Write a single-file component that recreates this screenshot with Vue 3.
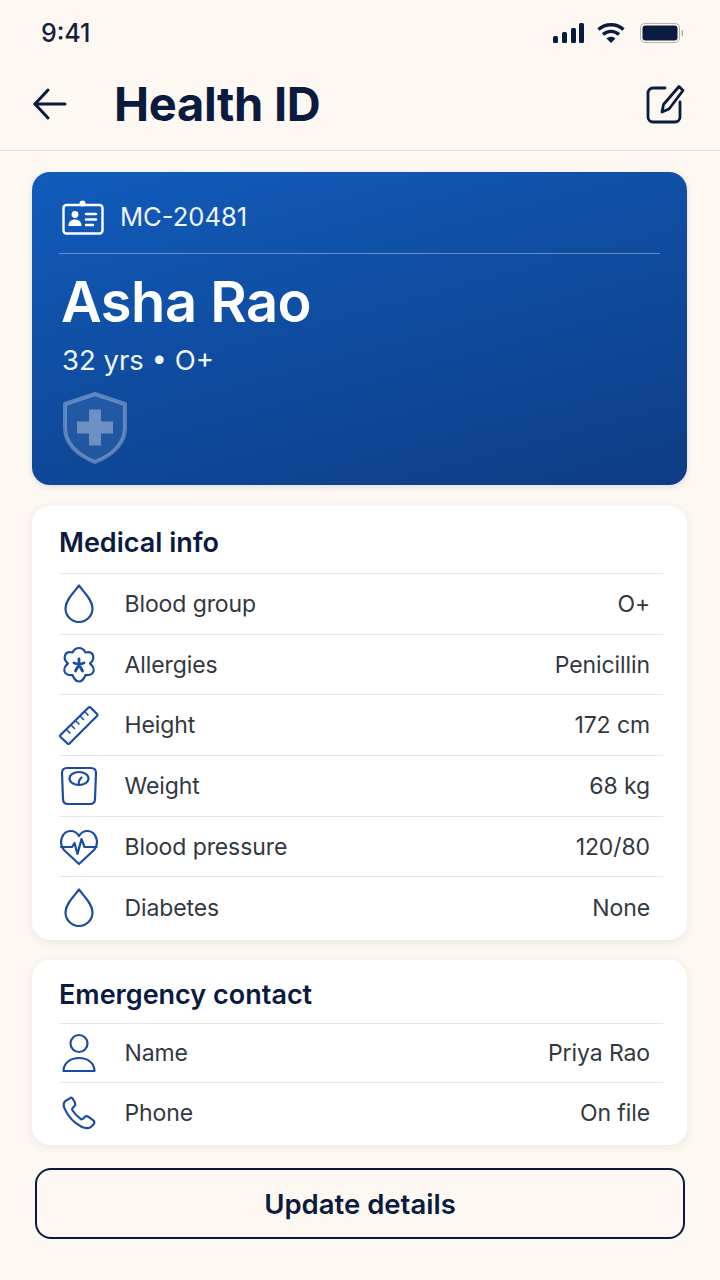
<template>
  <div class="screen">
    <!-- status bar -->
    <div class="status-bar">
      <span class="time">9:41</span>
      <div class="status-icons">
        <svg width="32" height="20" viewBox="0 0 32 20" fill="#0b1b3f">
          <rect x="0" y="13" width="5" height="7" rx="1.5" />
          <rect x="9" y="9" width="5" height="11" rx="1.5" />
          <rect x="18" y="5" width="5" height="15" rx="1.5" />
          <rect x="26" y="0" width="5" height="20" rx="1.5" />
        </svg>
        <svg class="wifi" width="28" height="22" viewBox="0 0 28 22" fill="none" stroke="#0b1b3f" stroke-width="3.4">
          <path d="M1.500 7.500c7-6.400 18-6.400 25 0" />
          <path d="M6 12.400c4.500-4.100 11.500-4.100 16 0" />
          <path d="M14 21l-4.500-4.600c2.500-2.200 6.500-2.200 9 0z" fill="#0b1b3f" stroke="none" />
        </svg>
        <svg width="44" height="20" viewBox="0 0 44 20">
          <rect x="0.500" y="0.500" width="39" height="19" rx="4.500" fill="#fdf8f2" stroke="#b5b4b0" />
          <rect x="2.500" y="2.500" width="35" height="15" rx="3" fill="#0b1b3f" />
          <rect x="41.500" y="7" width="1.500" height="6" rx="0.700" fill="#a9a9a7" />
        </svg>
      </div>
    </div>

    <!-- header -->
    <header class="app-header">
      <svg class="back" width="36" height="36" viewBox="0 0 36 36" fill="none" stroke="#0b1b3f" stroke-width="3" stroke-linecap="round" stroke-linejoin="round">
        <path d="M33 18H3" />
        <path d="M16 4 3 18l13 14" />
      </svg>
      <h1 class="title">Health ID</h1>
      <svg class="edit" width="40" height="40" viewBox="0 0 40 40" fill="none" stroke="#0b1b3f" stroke-width="2.800" stroke-linecap="round" stroke-linejoin="round">
        <path d="M20 4H8a5 5 0 0 0-5 5v24a5 5 0 0 0 5 5h22a5 5 0 0 0 5-5V18" />
        <path d="M34 2.500 38 6.500 24 25l-7 3 1.500-7.500z" />
      </svg>
    </header>

    <main class="content">
      <!-- id card -->
      <section class="hero">
        <div class="hero-id">
          <svg width="42" height="36" viewBox="0 0 42 36" fill="none" stroke="#fff" stroke-width="2.400" stroke-linecap="round" stroke-linejoin="round">
            <rect x="1.500" y="6" width="39" height="28.500" rx="3" />
            <circle cx="20.500" cy="4.500" r="3" fill="#fff" stroke="none" />
            <circle cx="13" cy="15.500" r="3.400" fill="#fff" stroke="none" />
            <path d="M6.500 27c0-4.500 3-6.500 6.500-6.500s6.500 2 6.500 6.500z" fill="#fff" stroke="none" />
            <path d="M24 15h10M24 20.500h10M24 26h7" />
          </svg>
          <span>MC-20481</span>
        </div>
        <div class="hero-text">
          <div class="hero-name">Asha Rao</div>
          <div class="hero-meta">32 yrs • O+</div>
          <svg class="shield" width="66" height="74" viewBox="0 0 66 74">
            <path d="M33 3 63 13v24c0 15-12 27-30 34C15 64 3 52 3 37V13z" fill="rgba(255,255,255,0.08)" stroke="rgba(255,255,255,0.3)" stroke-width="4" stroke-linejoin="round" />
            <path d="M27 19h12v12h12v12H39v12H27V43H15V31h12z" transform="translate(0 -0.500)" fill="rgba(255,255,255,0.34)" />
          </svg>
        </div>
      </section>

      <!-- medical info -->
      <section class="card medical">
        <h2 class="card-title">Medical info</h2>
        <div v-for="row in medicalRows" :key="row.label" class="row">
          <svg class="row-icon" width="40" height="40" viewBox="0 0 40 40" fill="none" stroke="#1b4ca3" stroke-width="2.200" stroke-linecap="round" stroke-linejoin="round">
            <template v-if="row.icon === 'drop'">
              <path d="M20 1.500c4.500 6.500 13.500 14 13.500 23a13.500 13.500 0 0 1-27 0C6.500 15.500 15.500 8 20 1.500z" />
            </template>
            <template v-else-if="row.icon === 'allergy'">
              <path d="M20 3c3.500 0 5.500 2.500 6.500 4.500 2.500-.5 6.500-.5 7.500 3 1 3.500-1 6.500-3 8 2 1.500 4.500 5 3.500 8-1 3.500-5.500 4-8 3.500-1 2.500-3 6.500-6.500 6.500s-5.500-4-6.500-6.500c-2.500.5-7 0-8-3.500-1-3 1.500-6.500 3.500-8-2-1.500-4-4.500-3-8 1-3.500 5-3.500 7.500-3C14.500 5.500 16.500 3 20 3z" />
              <path d="M20 14v6M15 18l5 1.500 5-1.500M20 19.500 16.500 26M20 19.500 23.500 26" stroke-width="2.800" />
            </template>
            <template v-else-if="row.icon === 'ruler'">
              <path d="M1.500 30 29.500 2.500a1.500 1.500 0 0 1 2 0L38 9a1.500 1.500 0 0 1 0 2L10.500 38.500a1.500 1.500 0 0 1-2 0L1.500 32a1.500 1.500 0 0 1 0-2z" />
              <path d="M8 25l3 3M12.500 20.500l3 3M17 16l3 3M21.500 11.500l3 3M26 7l3 3" stroke-width="1.600" />
            </template>
            <template v-else-if="row.icon === 'scale'">
              <path d="M8 2h24c3 0 5 2 5 5l-1 26c0 3-2 5-5 5H9c-3 0-5-2-5-5L3 7c0-3 2-5 5-5z" />
              <ellipse cx="20" cy="12.500" rx="9.500" ry="6.500" />
              <path d="M20 19c-1-3 0-5 2.500-7.500" />
            </template>
            <template v-else-if="row.icon === 'heart'">
              <path d="M20 37 5 23C-1 16 3 4.500 11 4c4-.2 7 1.500 9 5 2-3.500 5-5.200 9-5 8 .5 12 12 6 19z" />
              <path d="M2 20h11l2.500-4 3 11 4-15 3 8h12" />
            </template>
          </svg>
          <span class="row-label">{{ row.label }}</span>
          <span class="row-value">{{ row.value }}</span>
        </div>
      </section>

      <!-- emergency contact -->
      <section class="card contact">
        <h2 class="card-title">Emergency contact</h2>
        <div class="row">
          <svg class="row-icon" width="40" height="40" viewBox="0 0 40 40" fill="none" stroke="#1b4ca3" stroke-width="2.200" stroke-linecap="round" stroke-linejoin="round">
            <circle cx="20" cy="10.500" r="8.500" />
            <path d="M4.500 38c0-8 7-13 15.500-13s15.500 5 15.500 13z" />
          </svg>
          <span class="row-label">Name</span>
          <span class="row-value">Priya Rao</span>
        </div>
        <div class="row">
          <svg class="row-icon" width="40" height="40" viewBox="0 0 40 40" fill="none" stroke="#1b4ca3" stroke-width="2.500" stroke-linecap="round" stroke-linejoin="round">
            <path transform="translate(2.500 2.500) scale(.87)" d="M10 3 5 6C2 8 2 12 4 16c4 9 10 15 19 20 4 2 8 2 11 0l3-3c1-1.500 1-3 0-4l-6-4.500c-1.500-1-3-1-4 0l-2 2c-1 1-2 1-3 .5-4-3-7-6-9.500-10-.5-1-.5-2 .5-3l2-2c1-1 1-2.500 .5-4L13 4c-.5-1.500-2-2-3-1z" />
          </svg>
          <span class="row-label">Phone</span>
          <span class="row-value">On file</span>
        </div>
      </section>

      <button class="update-btn">Update details</button>
    </main>
  </div>
</template>

<script setup>
const medicalRows = [
  { icon: "drop", label: "Blood group", value: "O+" },
  { icon: "allergy", label: "Allergies", value: "Penicillin" },
  { icon: "ruler", label: "Height", value: "172 cm" },
  { icon: "scale", label: "Weight", value: "68 kg" },
  { icon: "heart", label: "Blood pressure", value: "120/80" },
  { icon: "drop", label: "Diabetes", value: "None" },
];
</script>

<style>
html,
body {
  margin: 0;
  background: #fdf8f2;
}
</style>

<style scoped>
.screen {
  width: 720px;
  height: 1280px;
  overflow: hidden;
  background: #fdf8f2;
  font-family: Inter, "Liberation Sans", sans-serif;
  color: #0b1b3f;
}

.status-bar {
  height: 68px;
  box-sizing: border-box;
  padding: 0 36px 2px 41px;
  display: flex;
  align-items: center;
  justify-content: space-between;
}

.time {
  font-size: 25px;
  font-weight: 500;
  color: #14213d;
}

.status-icons {
  display: flex;
  align-items: center;
  gap: 12px;
}

.wifi {
  margin-right: 3px;
}

.app-header {
  height: 83px;
  box-sizing: border-box;
  padding: 0 35px 10px 32px;
  display: flex;
  align-items: center;
  border-bottom: 1px solid #e4e1dd;
}

.title {
  margin: 0 0 2px 46px;
  flex: 1;
  font-size: 47px;
  font-weight: 700;
  letter-spacing: -0.3px;
  color: #0b1b3f;
}

.content {
  padding: 21px 33px 0 32px;
}

.hero {
  height: 313px;
  box-sizing: border-box;
  padding: 24px 27px 0 27px;
  border-radius: 18px;
  background: linear-gradient(165deg, #115cbc 0%, #0f4a9c 55%, #0e3d85 100%);
  box-shadow: 0 2px 6px rgba(20, 40, 80, 0.12);
  color: #fff;
}

.hero-id {
  height: 58px;
  padding: 0 3px 16px;
  box-sizing: border-box;
  display: flex;
  align-items: center;
  gap: 16px;
  font-size: 25.6px;
  color: #eef4fc;
  border-bottom: 1px solid rgba(255, 255, 255, 0.35);
}

.hero-text {
  padding-left: 2px;
}

.hero-name {
  margin-top: 14px;
  font-size: 56px;
  line-height: 68px;
  font-weight: 600;
  letter-spacing: -0.5px;
}

.hero-meta {
  margin-top: 7px;
  padding-left: 1px;
  font-size: 27.5px;
  line-height: 34px;
  color: #eef4fc;
}

.shield {
  display: block;
  margin: 14px 0 0 1px;
}

.card {
  margin-top: 21px;
  box-sizing: border-box;
  padding: 0 24px 0 27px;
  background: #fff;
  border-radius: 18px;
  box-shadow: 0 2px 10px rgba(60, 50, 40, 0.09);
}

.medical {
  height: 434px;
}

.contact {
  height: 185px;
  margin-top: 20px;
}

.card-title {
  margin: 0;
  height: 67px;
  line-height: 74px;
  font-size: 27px;
  font-weight: 600;
  color: #0b1b3f;
  border-bottom: 1px solid #e6e6e4;
}

.contact .card-title {
  height: 63px;
  line-height: 70px;
}

.row {
  height: 60.7px;
  box-sizing: border-box;
  display: flex;
  align-items: center;
  padding-right: 13px;
  font-size: 23px;
  letter-spacing: -0.1px;
  color: #33383f;
  border-bottom: 1px solid #e6e6e4;
}

.contact .row {
  height: 59px;
}

.row:last-child {
  border-bottom: none;
}

.row-icon {
  width: 40px;
  height: 40px;
  flex-shrink: 0;
}

.row-label {
  margin-left: 25.5px;
  flex: 1;
}

.update-btn {
  display: block;
  width: 650px;
  height: 71px;
  margin: 23px 0 0 3px;
  background: transparent;
  border: 2px solid #0b1b3f;
  border-radius: 16px;
  font-family: inherit;
  font-size: 27.5px;
  font-weight: 600;
  color: #0b1b3f;
}
</style>
